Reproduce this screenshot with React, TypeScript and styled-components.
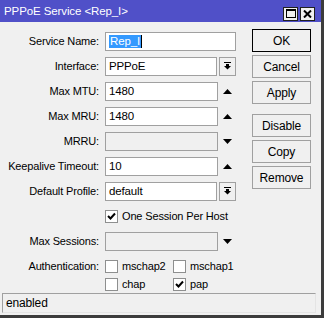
import React from 'react';
import styled, { createGlobalStyle } from 'styled-components';

const Global = createGlobalStyle`
  html, body { margin: 0; padding: 0; background: #f0f0f0; }
  body {
    font-family: "Liberation Sans", Arial, sans-serif;
    font-size: 11px;
    letter-spacing: -0.15px;
    color: #000;
  }
  * { box-sizing: border-box; }
`;

const Window = styled.div`
  width: 324px;
  height: 318px;
  background: #f0f0f0;
  border-right: 3px solid #3c3c3c;
  border-bottom: 3px solid #3c3c3c;
  display: flex;
  flex-direction: column;
`;

const TitleBar = styled.div`
  height: 22px;
  background: #5050c8;
  color: #fff;
  display: flex;
  align-items: center;
  padding-left: 4px;
  padding-right: 6px;
  font-size: 11.5px;
  letter-spacing: -0.1px;
`;

const TitleText = styled.span`
  flex: 1;
  white-space: nowrap;
`;

const TitleButtons = styled.div`
  display: flex;
  gap: 2px;
  margin-top: 5px;
`;

const TitleButton = styled.div`
  width: 15px;
  height: 14px;
  background: #f0f0f0;
  border: 1px solid #202020;
  display: flex;
  align-items: center;
  justify-content: center;
`;

const Body = styled.div`
  display: flex;
  align-items: flex-start;
`;

const Form = styled.div`
  width: 236px;
  margin-top: 9px;
  display: grid;
  grid-template-columns: 105px 131px;
  grid-auto-rows: 20px;
  row-gap: 5px;
`;

const Label = styled.div`
  padding-right: 6px;
  display: flex;
  align-items: center;
  justify-content: flex-end;
  white-space: nowrap;
`;

const Field = styled.div`
  display: flex;
  align-items: center;
`;

const Input = styled.div<{ $disabled?: boolean }>`
  flex: 1;
  height: 19px;
  border: 1px solid #a0a0a0;
  background: ${p => (p.$disabled ? '#f0f0f0' : '#fff')};
  display: flex;
  align-items: center;
  padding-left: 3px;
  white-space: nowrap;
  font-size: 11.5px;
`;

const Selected = styled.span`
  background: #3399ff;
  color: #fff;
  padding: 0 1px 1px 1px;
  border-right: 1px solid #000;
`;

const Slot = styled.div`
  width: 18px;
  display: flex;
  align-items: center;
  justify-content: center;
  flex-shrink: 0;
`;

const DropButton = styled.div`
  width: 17px;
  height: 19px;
  margin-left: 2px;
  border: 1px solid #a0a0a0;
  background: #f0f0f0;
  display: flex;
  align-items: center;
  justify-content: center;
  flex-shrink: 0;
`;

const CheckRow = styled.div`
  display: flex;
  align-items: center;
  gap: 4px;
  white-space: nowrap;
`;

const AuthLabel = styled(Label)`
  height: 20px;
  align-self: start;
`;

const AuthBlock = styled.div`
  display: grid;
  grid-template-columns: 68px 1fr;
  grid-auto-rows: 18px;
  margin-top: 1px;
`;

const Box = styled.div`
  width: 13px;
  height: 13px;
  border: 1px solid #8e8f8f;
  background: #fff;
  display: flex;
  align-items: center;
  justify-content: center;
  flex-shrink: 0;
`;

const ButtonColumn = styled.div`
  margin-left: 16px;
  margin-top: 7px;
  width: 59px;
  display: flex;
  flex-direction: column;
  gap: 3px;
`;

const Button = styled.div<{ $default?: boolean; $spaced?: boolean }>`
  height: 23px;
  border: 1px solid ${p => (p.$default ? '#000' : '#a0a0a0')};
  background: #f0f0f0;
  display: flex;
  align-items: center;
  justify-content: center;
  font-size: 12px;
  margin-top: ${p => (p.$spaced ? '7px' : '0')};
`;

const StatusBar = styled.div`
  margin: auto 5px 2px 2px;
  height: 20px;
  border-top: 1px solid #a0a0a0;
  border-left: 1px solid #a0a0a0;
  border-right: 1px solid #e4e4e4;
  border-bottom: 1px solid #e4e4e4;
  display: flex;
  align-items: center;
  padding-left: 3px;
  font-size: 12px;
`;

const UpArrow = () => (
  <svg width="9" height="5" viewBox="0 0 9 5"><polygon points="0,5 9,5 4.5,0" fill="#000" /></svg>
);
const DownArrow = () => (
  <svg width="9" height="5" viewBox="0 0 9 5"><polygon points="0,0 9,0 4.5,5" fill="#000" /></svg>
);
const DropIcon = () => (
  <svg width="7" height="9" viewBox="0 0 7 9">
    <rect x="0" y="0" width="7" height="1" fill="#000" />
    <rect x="2" y="2" width="3" height="2" fill="#000" />
    <polygon points="0,4 7,4 3.5,7.5" fill="#000" />
  </svg>
);
const Check = () => (
  <svg width="9" height="9" viewBox="0 0 9 9">
    <polyline points="1,4 3.5,6.5 8,1.5" fill="none" stroke="#000" strokeWidth="2" />
  </svg>
);

const Checkbox = ({ checked, label }: { checked?: boolean; label: string }) => (
  <CheckRow>
    <Box>{checked && <Check />}</Box>
    <span>{label}</span>
  </CheckRow>
);

export default function App() {
  return (
    <>
      <Global />
      <Window>
        <TitleBar>
          <TitleText>PPPoE Service &lt;Rep_I&gt;</TitleText>
          <TitleButtons>
            <TitleButton>
              <svg width="10" height="9" viewBox="0 0 10 9">
                <rect x="0.5" y="0.5" width="9" height="8" fill="none" stroke="#000" />
                <rect x="0" y="0" width="10" height="2" fill="#000" />
              </svg>
            </TitleButton>
            <TitleButton>
              <svg width="9" height="8" viewBox="0 0 9 8">
                <path d="M1 0.5 L8 7.5 M8 0.5 L1 7.5" stroke="#000" strokeWidth="2" />
              </svg>
            </TitleButton>
          </TitleButtons>
        </TitleBar>
        <Body>
          <Form>
            <Label>Service Name:</Label>
            <Field><Input><Selected>Rep_I</Selected></Input></Field>

            <Label>Interface:</Label>
            <Field><Input>PPPoE</Input><DropButton><DropIcon /></DropButton></Field>

            <Label>Max MTU:</Label>
            <Field><Input>1480</Input><Slot><UpArrow /></Slot></Field>

            <Label>Max MRU:</Label>
            <Field><Input>1480</Input><Slot><UpArrow /></Slot></Field>

            <Label>MRRU:</Label>
            <Field><Input $disabled /><Slot><DownArrow /></Slot></Field>

            <Label>Keepalive Timeout:</Label>
            <Field><Input>10</Input><Slot><UpArrow /></Slot></Field>

            <Label>Default Profile:</Label>
            <Field><Input>default</Input><DropButton><DropIcon /></DropButton></Field>

            <div />
            <Field><Checkbox checked label="One Session Per Host" /></Field>

            <Label>Max Sessions:</Label>
            <Field><Input $disabled /><Slot><DownArrow /></Slot></Field>

            <AuthLabel>Authentication:</AuthLabel>
            <AuthBlock>
              <Checkbox label="mschap2" />
              <Checkbox label="mschap1" />
              <Checkbox label="chap" />
              <Checkbox checked label="pap" />
            </AuthBlock>
          </Form>
          <ButtonColumn>
            <Button $default>OK</Button>
            <Button>Cancel</Button>
            <Button>Apply</Button>
            <Button $spaced>Disable</Button>
            <Button>Copy</Button>
            <Button>Remove</Button>
          </ButtonColumn>
        </Body>
        <StatusBar>enabled</StatusBar>
      </Window>
    </>
  );
}
